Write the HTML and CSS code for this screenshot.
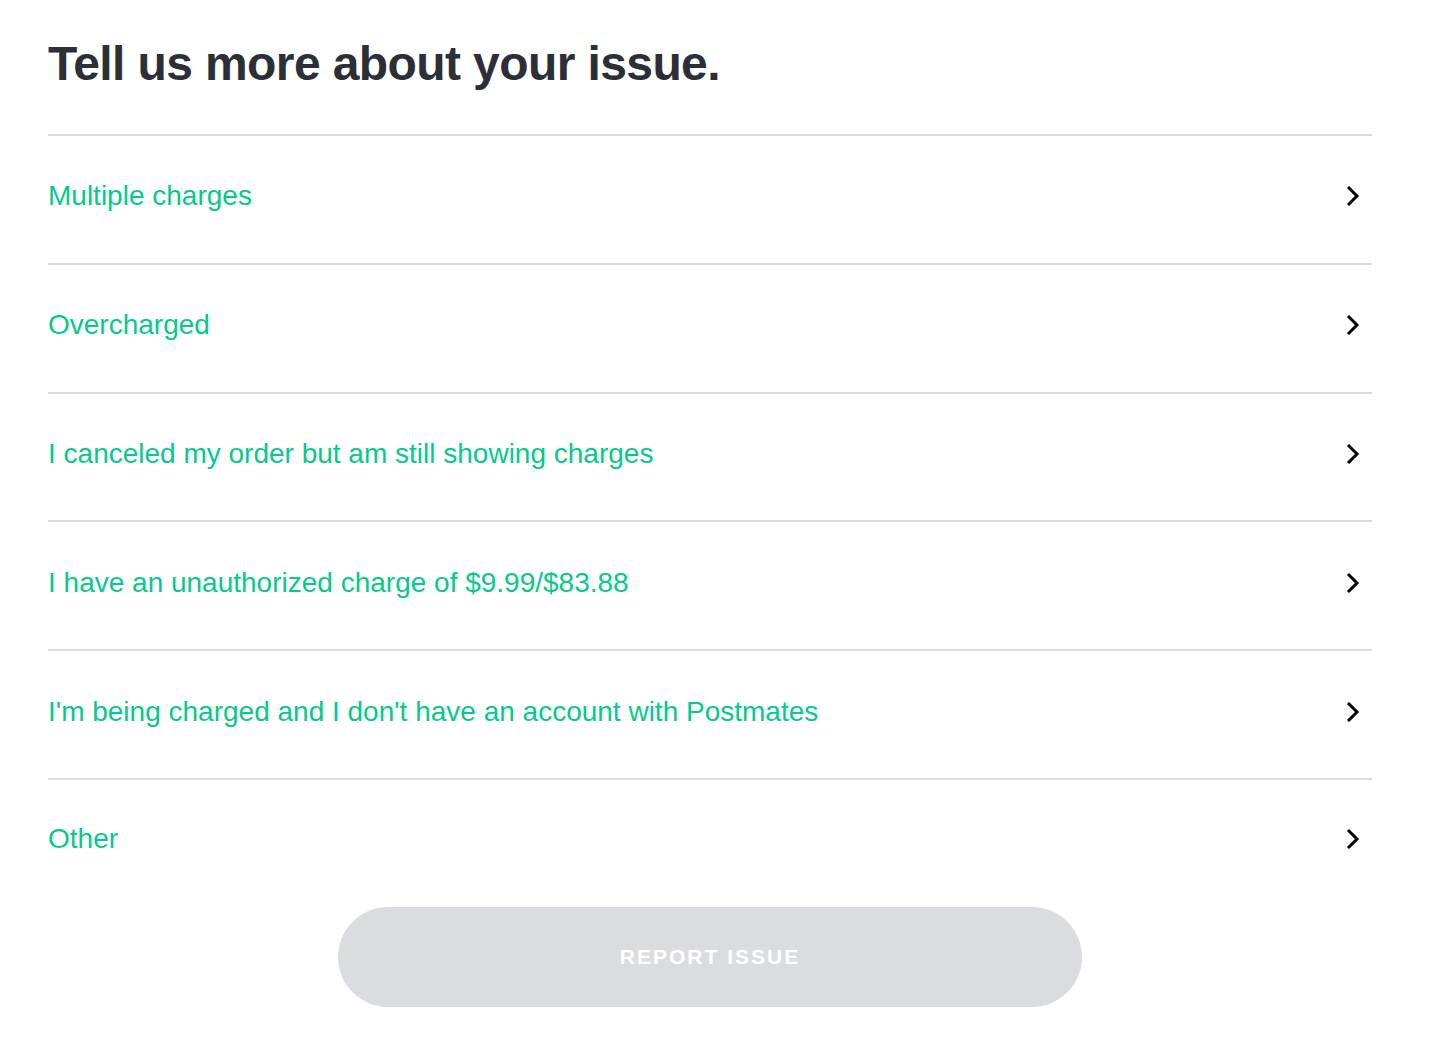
FILE: index.html
```html
<!DOCTYPE html>
<html lang="en">
<head>
<meta charset="utf-8">
<title>Tell us more about your issue.</title>
<link rel="stylesheet" href="styles.css">
</head>
<body>
<main class="page">
  <h1 class="title">Tell us more about your issue.</h1>
  <ul class="options">
    <li class="option"><span class="option-label">Multiple charges</span><svg class="chev" viewBox="0 0 16 24" width="16" height="24"><path d="M3 3 L12 12 L3 21" fill="none" stroke="#000" stroke-width="3"/></svg></li>
    <li class="option"><span class="option-label">Overcharged</span><svg class="chev" viewBox="0 0 16 24" width="16" height="24"><path d="M3 3 L12 12 L3 21" fill="none" stroke="#000" stroke-width="3"/></svg></li>
    <li class="option"><span class="option-label">I canceled my order but am still showing charges</span><svg class="chev" viewBox="0 0 16 24" width="16" height="24"><path d="M3 3 L12 12 L3 21" fill="none" stroke="#000" stroke-width="3"/></svg></li>
    <li class="option"><span class="option-label">I have an unauthorized charge of $9.99/$83.88</span><svg class="chev" viewBox="0 0 16 24" width="16" height="24"><path d="M3 3 L12 12 L3 21" fill="none" stroke="#000" stroke-width="3"/></svg></li>
    <li class="option"><span class="option-label">I'm being charged and I don't have an account with Postmates</span><svg class="chev" viewBox="0 0 16 24" width="16" height="24"><path d="M3 3 L12 12 L3 21" fill="none" stroke="#000" stroke-width="3"/></svg></li>
    <li class="option"><span class="option-label">Other</span><svg class="chev" viewBox="0 0 16 24" width="16" height="24"><path d="M3 3 L12 12 L3 21" fill="none" stroke="#000" stroke-width="3"/></svg></li>
  </ul>
  <div class="actions">
    <button class="report-btn" type="button" disabled>REPORT ISSUE</button>
  </div>
</main>
</body>
</html>
```
FILE: styles.css
```css
html, body {
  margin: 0;
  padding: 0;
  background: #ffffff;
}
body {
  font-family: "Liberation Sans", Arial, sans-serif;
}
.page {
  width: 1324px;
  padding: 0 0 0 48px;
}
.title {
  margin: 0;
  padding-top: 36px;
  height: 134px;
  box-sizing: border-box;
  font-size: 48px;
  line-height: 56px;
  font-weight: 700;
  color: #2b2f36;
  letter-spacing: -0.6px;
}
.options {
  list-style: none;
  margin: 0;
  padding: 0;
}
.option {
  display: flex;
  align-items: center;
  justify-content: space-between;
  height: 128.8px;
  border-top: 2px solid #dcdcde;
  box-sizing: border-box;
  padding-bottom: 6px;
}
.option:last-child {
  padding-bottom: 8px;
}
.option-label {
  font-size: 28px;
  color: #06c98b;
}
.chev {
  display: block;
  margin-right: 11px;
}
.actions {
  display: flex;
  justify-content: center;
}
.report-btn {
  width: 744px;
  height: 100px;
  border: none;
  border-radius: 50px;
  background: #dbdce0;
  color: #ffffff;
  font-family: "Liberation Sans", Arial, sans-serif;
  font-size: 21px;
  font-weight: 700;
  letter-spacing: 2px;
}
```
